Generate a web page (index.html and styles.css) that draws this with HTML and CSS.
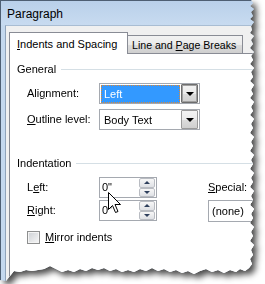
FILE: index.html
```html
<!DOCTYPE html>
<html lang="en">
<head>
  <meta charset="UTF-8" />
  <title>Paragraph</title>
  <link rel="stylesheet" href="styles.css">
</head>
<body>
  <div class="shot">
    <div class="window">
      <div class="titlebar">Paragraph</div>
      <div class="client">
        <div class="tabs">
          <div class="tab active"><u>I</u>ndents and Spacing</div>
          <div class="tab">Line and <u>P</u>age Breaks</div>
        </div>
        <div class="panel">
          <div class="group">General</div>
          <div class="row first">
            <div class="label">Ali<u>g</u>nment:</div>
            <div class="combo">
              <div class="value selected">Left</div>
              <div class="drop focus"><span class="arrow"></span></div>
            </div>
          </div>
          <div class="row">
            <div class="label"><u>O</u>utline level:</div>
            <div class="combo">
              <div class="value">Body Text</div>
              <div class="drop"><span class="arrow"></span></div>
            </div>
          </div>

          <div class="group second">Indentation</div>
          <div class="indent">
            <div class="label">L<u>e</u>ft:</div>
            <div class="spin">
              <div class="spin-text">0"</div>
              <div class="spin-btns">
                <div class="sbtn"><span class="up"></span></div>
                <div class="sbtn"><span class="down"></span></div>
              </div>
            </div>
            <div class="label"><u>S</u>pecial:</div>
            <div class="label"><u>R</u>ight:</div>
            <div class="spin">
              <div class="spin-text">0"</div>
              <div class="spin-btns">
                <div class="sbtn"><span class="up"></span></div>
                <div class="sbtn"><span class="down"></span></div>
              </div>
            </div>
            <div class="plain-box">(none)</div>
          </div>

          <div class="check-row">
            <span class="checkbox"></span>
            <span><u>M</u>irror indents</span>
          </div>
        </div>
      </div>
    </div>

    <svg class="cursor" width="14" height="22" viewBox="0 0 14 22">
      <path d="M0.5 0.5 L0.5 17.5 L4.5 13.5 L7.5 20.5 L10 19.5 L7 12.5 L12.5 12.5 Z" fill="#fff" stroke="#000" stroke-width="1" />
    </svg>
  </div>
</body>
</html>
```

FILE: styles.css
```css
* {
  margin: 0;
  padding: 0;
  box-sizing: border-box;
}
body {
  background: #fff;
  color: #000;
  font: 11px/13px "Liberation Sans", Arial, sans-serif;
}
u {
  text-decoration: underline;
  text-underline-offset: 1px;
}
.shot {
  position: relative;
  width: 265px;
  height: 284px;
  overflow: hidden;
  filter: drop-shadow(4px 4px 3px rgba(0, 0, 0, 0.7));
}
.window {
  width: 260px;
  height: 284px;
  overflow: hidden;
  display: flex;
  flex-direction: column;
  background: #c4d8ee;
  border-left: 1px solid #4e5f73;
  border-top: 1px solid #4e5f73;
  clip-path: polygon(
    0 0, 251px 0, 253px 3px, 250px 6px, 254px 9px, 251px 12px, 253px 16px, 250px 19px,
    254px 22px, 251px 26px, 252px 30px, 250px 33px, 254px 36px, 251px 40px, 253px 44px,
    250px 48px, 254px 52px, 251px 56px, 253px 60px, 250px 64px, 254px 68px, 251px 72px,
    253px 77px, 250px 81px, 254px 85px, 251px 90px, 253px 94px, 250px 98px, 254px 102px,
    251px 107px, 253px 111px, 250px 115px, 254px 119px, 251px 124px, 253px 128px,
    250px 133px, 254px 137px, 251px 142px, 253px 146px, 250px 151px, 254px 155px,
    251px 160px, 253px 164px, 250px 169px, 254px 173px, 251px 178px, 253px 182px,
    250px 187px, 254px 191px, 251px 196px, 253px 200px, 250px 205px, 254px 209px,
    251px 214px, 253px 218px, 250px 223px, 254px 227px, 251px 232px, 253px 236px,
    250px 241px, 254px 245px, 251px 250px, 253px 255px, 250px 259px, 252px 264px,
    249px 268px, 245px 271px, 240px 269px, 236px 272px, 230px 270px, 224px 273px,
    218px 270px, 212px 272px, 206px 269px, 200px 271px, 194px 274px, 188px 271px,
    182px 273px, 176px 270px, 170px 272px, 164px 269px, 158px 271px, 152px 268px,
    146px 271px, 140px 269px, 134px 272px, 128px 270px, 122px 272px, 116px 269px,
    110px 271px, 104px 268px, 98px 270px, 92px 268px, 86px 271px, 80px 269px,
    74px 272px, 68px 270px, 62px 272px, 56px 269px, 50px 266px, 44px 269px,
    38px 270px, 32px 271px, 26px 270px, 20px 272px, 14px 271px, 10px 276px,
    6px 281px, 0 280px
  );
}
.titlebar {
  height: 24px;
  padding: 6px 0 0 6px;
  font-size: 12px;
  line-height: 14px;
  color: #000;
  background: linear-gradient(#b9d0ea, #c8dbf0);
}
.client {
  flex: 1;
  min-width: 0;
  display: flex;
  flex-direction: column;
  margin-left: 4px;
  padding: 6px 0 0 3px;
  background: #f0f0f0;
  border-left: 1px solid #8fa3ba;
  border-top: 1px solid #a9bdd3;
}
.tabs {
  display: flex;
  align-items: flex-end;
  height: 22px;
  margin-bottom: -1px;
  position: relative;
  z-index: 1;
}
.tab {
  height: 18px;
  width: 116px;
  margin-left: -1px;
  margin-bottom: 1px;
  padding: 3px 0 0 4px;
  border: 1px solid #898c95;
  border-bottom: none;
  font-size: 10.6px;
  background: linear-gradient(#f2f2f2 0%, #ebebeb 50%, #dddddd 50%, #cfcfcf 100%);
}
.tab.active {
  height: 22px;
  width: 119px;
  margin-left: 0;
  margin-bottom: 0;
  padding: 5px 0 0 7px;
  font-size: 11px;
  background: #fff;
}
.panel {
  flex: 1;
  overflow: hidden;
  padding: 9px 0 0 7px;
  background: #fff;
  border: 1px solid #898c95;
  border-right: none;
}
.group {
  display: flex;
  align-items: center;
  gap: 5px;
  height: 13px;
}
.group::after {
  content: "";
  flex: 1;
  height: 1px;
  background: #d5dfe5;
}
.group.second {
  margin-top: 27px;
}
.row {
  display: flex;
  align-items: center;
  height: 21px;
  margin-top: 5px;
  padding-left: 10px;
}
.row.first {
  margin-top: 7px;
}
.label {
  width: 72px;
}
.combo {
  display: flex;
  align-items: center;
  gap: 1px;
  width: 101px;
  height: 21px;
  padding: 0 1px;
  border: 1px solid #a5a9b0;
  background: #fff;
}
.value {
  flex: 1;
  height: 18px;
  padding: 2px 0 0 2px;
  border: 1px solid transparent;
}
.value.selected {
  background: #3399ff;
  color: #fff;
  border: 1px dotted #d9883a;
}
.drop {
  display: flex;
  align-items: center;
  justify-content: center;
  width: 17px;
  height: 19px;
  border: 1px solid #9a9a9a;
  border-radius: 1px;
  background: linear-gradient(#f3f3f3 0%, #ebebeb 50%, #dddddd 50%, #cfcfcf 100%);
}
.drop.focus {
  border-color: #6e6e6e;
  box-shadow: inset 0 0 0 1px #a0a0a0;
}
.arrow {
  width: 0;
  height: 0;
  border-left: 4px solid transparent;
  border-right: 4px solid transparent;
  border-top: 4px solid #000;
}
.indent {
  display: grid;
  grid-template-columns: 72px 109px 60px;
  grid-template-rows: 21px 21px;
  row-gap: 2px;
  align-items: center;
  margin-top: 7px;
  padding-left: 10px;
}
.indent .label {
  width: auto;
  white-space: nowrap;
}
.spin {
  display: flex;
  width: 58px;
  height: 21px;
  padding: 0 1px 0 0;
  border: 1px solid #a5a9b0;
  background: #fff;
}
.spin-text {
  flex: 1;
  padding: 3px 0 0 2px;
}
.spin-btns {
  display: flex;
  flex-direction: column;
  width: 16px;
}
.sbtn {
  flex: 1;
  display: flex;
  align-items: center;
  justify-content: center;
  border: 1px solid #b9bcc2;
  border-radius: 2px;
  background: linear-gradient(#f7f7f7, #dfe1e5);
}
.up,
.down {
  width: 0;
  height: 0;
  border-left: 3px solid transparent;
  border-right: 3px solid transparent;
}
.up {
  border-bottom: 3px solid #2e3f5c;
}
.down {
  border-top: 3px solid #2e3f5c;
}
.plain-box {
  height: 22px;
  padding: 4px 0 0 3px;
  border: 1px solid #a5a9b0;
  background: #fff;
}
.check-row {
  display: flex;
  align-items: center;
  gap: 5px;
  height: 13px;
  margin-top: 10px;
  padding-left: 10px;
}
.checkbox {
  width: 13px;
  height: 13px;
  border: 1px solid #8e8f8f;
  background: linear-gradient(135deg, #cdd0d4, #f7f7f7);
  box-shadow: inset 0 0 0 1px #f4f4f4;
}
.cursor {
  position: absolute;
  left: 108px;
  top: 192px;
}
```
